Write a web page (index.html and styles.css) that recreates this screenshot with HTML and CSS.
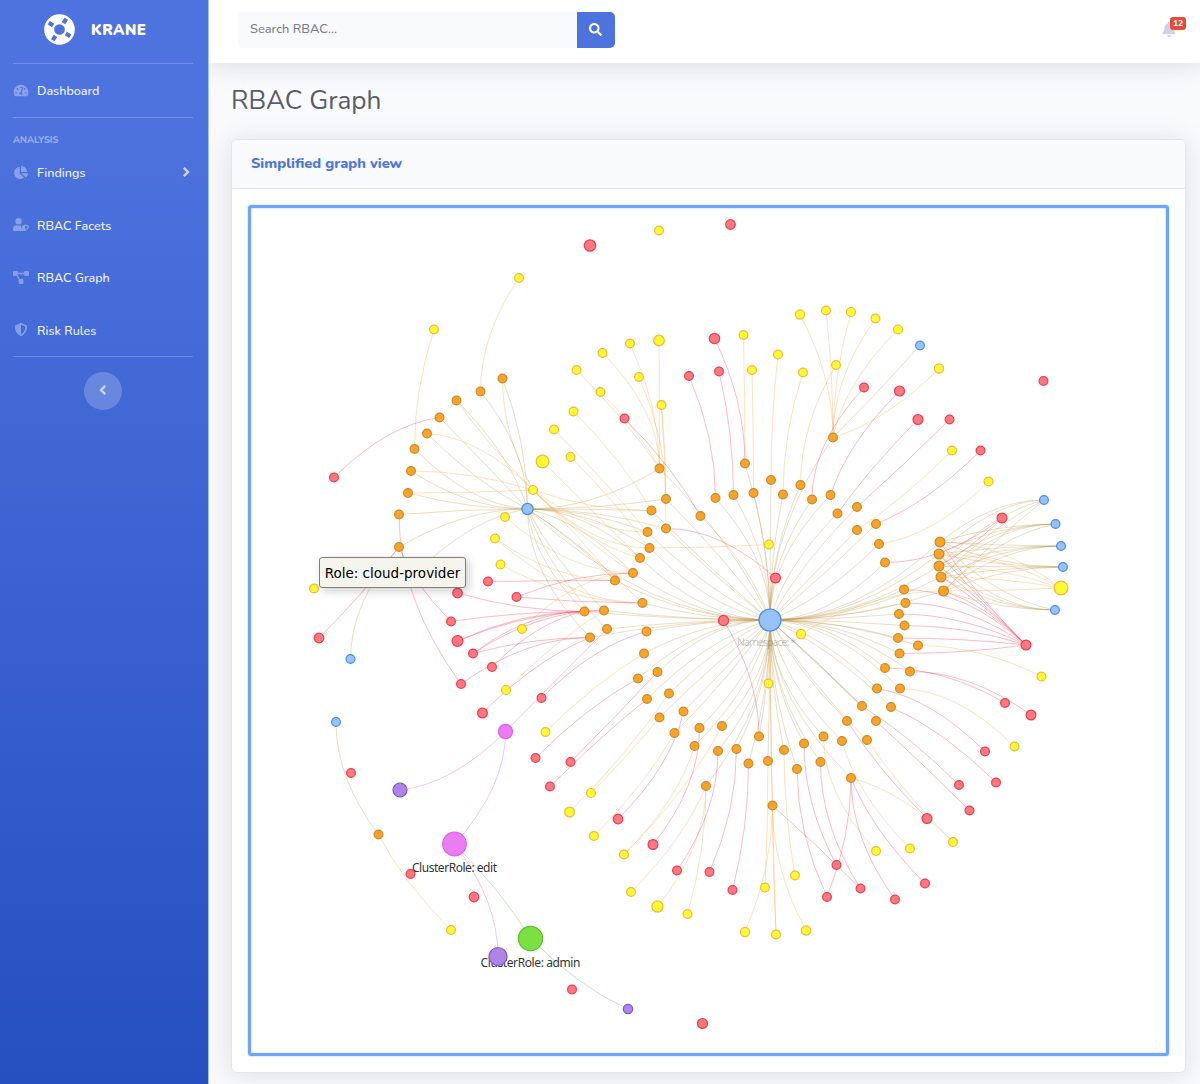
FILE: index.html
```html
<!DOCTYPE html>
<html lang="en">
<head>
<meta charset="utf-8">
<title>Krane - RBAC Graph</title>
<link rel="stylesheet" href="styles.css">
</head>
<body>
<div class="app">
  <nav class="sidebar">
    <a class="brand">
      <svg class="brand-icon" viewBox="-15 -15 30 30">
        <circle r="10" fill="none" stroke="#fff" stroke-width="9.6"/>
        <g fill="#4e73df" transform="rotate(-58)">
          <rect x="7.3" y="-2" width="5" height="4"/>
          <rect x="-12.3" y="-2" width="5" height="4"/>
          <rect x="-2" y="7.3" width="4" height="5"/>
          <rect x="-2" y="-12.3" width="4" height="5"/>
        </g>
      </svg>
      <span class="brand-text">KRANE</span>
    </a>
    <hr class="divider">
    <a class="nav-link">
      <svg class="nav-icon" viewBox="0 0 576 512"><path fill-rule="evenodd" d="M288 32C129 32 0 161 0 320c0 53 14 102 39 145 6 9 16 15 27 15h444c11 0 21-6 27-15 25-43 39-92 39-145C576 161 447 32 288 32zm0 64a32 32 0 1 1 0 64 32 32 0 0 1 0-64zM96 384a32 32 0 1 1 0-64 32 32 0 0 1 0 64zm48-160a32 32 0 1 1 0-64 32 32 0 0 1 0 64zm199 192H233c-26-45 0-94 42-96l62-184c8-24 46-13 38 12l-61 184c30 15 46 50 29 84zm137-32a32 32 0 1 1 0-64 32 32 0 0 1 0 64zm-48-160a32 32 0 1 1 0-64 32 32 0 0 1 0 64z"/></svg>
      <span>Dashboard</span>
    </a>
    <hr class="divider">
    <div class="heading">ANALYSIS</div>
    <a class="nav-link">
      <svg class="nav-icon" viewBox="0 0 544 512"><path d="M527.79 288H290.5l158.03 158.03c6.04 6.04 15.98 6.53 22.19.68 38.7-36.46 65.32-85.61 73.13-140.86 1.34-9.46-6.51-17.85-16.06-17.85zm-15.83-64.8C503.72 103.74 408.26 8.28 288.8.04 279.68-.59 272 7.1 272 16.24V240h223.77c9.14 0 16.82-7.68 16.19-16.8zM224 288V50.71c0-9.55-8.39-17.4-17.84-16.06C86.99 51.49-4.1 155.6.14 280.37 4.5 408.51 114.83 513.59 243.03 511.98c50.4-.63 96.97-16.87 135.26-44.03 7.9-5.6 8.42-17.23 1.57-24.08L224 288z"/></svg>
      <span>Findings</span>
      <svg class="chevron" viewBox="0 0 8 12"><path d="M1.8 1.8L6 6l-4.2 4.2"/></svg>
    </a>
    <a class="nav-link low">
      <svg class="nav-icon" viewBox="0 0 640 512"><path fill-rule="evenodd" d="M224 256A128 128 0 1 0 224 0a128 128 0 0 0 0 256zm96 64c-5-19-2-28 4-32h-10c-55 25-125 25-180 0C60 288 0 348 0 422v42c0 27 21 48 48 48h400c-70-40-121-105-128-192zm302-15l-115-48c-7-3-15-3-22 0l-115 48c-11 5-18 15-18 27 0 119 69 201 133 180 45-15 155-90 155-180 0-12-7-22-18-27zM496 464V310l96 40c-4 50-45 98-96 114z"/></svg>
      <span>RBAC Facets</span>
    </a>
    <a class="nav-link low">
      <svg class="nav-icon" viewBox="0 0 640 512"><path d="M32 0h128a32 32 0 0 1 32 32v32h256V32a32 32 0 0 1 32-32h128a32 32 0 0 1 32 32v128a32 32 0 0 1-32 32H480a32 32 0 0 1-32-32v-32H192v32l-4 14 84 146h112a32 32 0 0 1 32 32v128a32 32 0 0 1-32 32H256a32 32 0 0 1-32-32V352l5-16-83-144H32a32 32 0 0 1-32-32V32A32 32 0 0 1 32 0z"/></svg>
      <span>RBAC Graph</span>
    </a>
    <a class="nav-link low">
      <svg class="nav-icon" viewBox="0 0 512 512"><path d="M466.5 83.7l-192-80a48.15 48.15 0 0 0-36.9 0l-192 80C27.7 91.1 16 108.6 16 128c0 198.5 114.5 335.7 221.5 380.3 11.8 4.9 25.1 4.9 36.9 0C360.1 472.6 496 349.3 496 128c0-19.4-11.7-36.9-29.5-44.3zM256.1 446.3l-.1-381 175.9 73.3c-3.3 151.4-82.1 261.1-175.8 307.7z"/></svg>
      <span>Risk Rules</span>
    </a>
    <hr class="divider">
    <button class="collapse"><svg class="chevron" viewBox="0 0 8 12"><path d="M6.2 1.8L2 6l4.2 4.2"/></svg></button>
  </nav>

  <div class="content">
    <header class="topbar">
      <div class="search">
        <div class="search-input">Search RBAC...</div>
        <button class="search-button"><svg viewBox="0 0 512 512"><path d="M505 442.7L405.3 343c-4.5-4.5-10.6-7-17-7H372c27.6-35.3 44-79.7 44-128C416 93.1 322.9 0 208 0S0 93.1 0 208s93.1 208 208 208c48.3 0 92.7-16.4 128-44v16.3c0 6.4 2.5 12.5 7 17l99.7 99.7c9.4 9.4 24.6 9.4 33.9 0l28.3-28.3c9.4-9.4 9.4-24.6.1-34zM208 336c-70.7 0-128-57.2-128-128 0-70.7 57.2-128 128-128 70.7 0 128 57.2 128 128 0 70.7-57.2 128-128 128z"/></svg></button>
      </div>
      <div class="alerts">
        <svg viewBox="0 0 448 512"><path d="M224 512c35.32 0 63.97-28.65 63.97-64H160.03c0 35.35 28.65 64 63.97 64zm215.39-149.71c-19.32-20.76-55.47-51.99-55.47-154.29 0-77.7-54.48-139.9-127.94-155.16V32c0-17.67-14.32-32-31.98-32s-31.98 14.33-31.98 32v20.84C118.56 68.1 64.08 130.3 64.08 208c0 102.3-36.15 133.53-55.47 154.29-6 6.45-8.66 14.16-8.61 21.71.11 16.4 12.98 32 32.1 32h383.8c19.12 0 32-15.6 32.1-32 .05-7.55-2.61-15.27-8.61-21.71z"/></svg>
        <span class="badge">12</span>
      </div>
    </header>
    <main class="page">
      <h1>RBAC Graph</h1>
      <section class="card">
        <h2 class="card-header"><span>Simplified graph view</span></h2>
        <div class="card-body">
          <div class="network">
            <svg id="graph" viewBox="251 208 915 845"></svg>
            <div class="tooltip"><span>Role: cloud-provider</span></div>
          </div>
        </div>
      </section>
    </main>
  </div>
</div>
<script src="graph.js"></script>
</body>
</html>
```

FILE: styles.css
```css
* { box-sizing: border-box; }
body {
  margin: 0;
  font-family: Nunito, "Open Sans", "Noto Sans", sans-serif;
  background: #f8fafc;
}
button { border: 0; padding: 0; }
h1, h2 { margin: 0; font-weight: 400; }
.app { display: flex; height: 1084px; overflow: hidden; }

.sidebar {
  position: relative;
  z-index: 1;
  width: 209px;
  flex: none;
  display: flex;
  flex-direction: column;
  background: linear-gradient(180deg, #4e73df 10%, #264fbf 100%);
  border-right: 1px solid #a9b9f2;
  color: #f0f3fd;
}
.brand {
  height: 63px;
  flex: none;
  display: flex;
  align-items: center;
  padding: 0 0 4px 44px;
  color: #fff;
}
.brand-icon { width: 31px; height: 31px; }
.brand-text {
  margin-left: 16px;
  font-size: 15px;
  font-weight: 900;
  letter-spacing: 0.5px;
}
.divider {
  width: 180px;
  height: 1px;
  flex: none;
  margin: 0 0 0 13px;
  border: 0;
  background: rgba(255, 255, 255, 0.2);
}
.nav-link {
  height: 52.5px;
  flex: none;
  display: flex;
  align-items: center;
  gap: 8px;
  padding-left: 13px;
  font-size: 12.6px;
  font-weight: 500;
}
.nav-link.low span { padding-top: 1px; }
.nav-icon { width: 16px; height: 13px; fill: rgba(255, 255, 255, 0.34); }
.chevron { width: 8px; height: 12px; fill: none; stroke: #c8d3f7; stroke-width: 2.4; }
.nav-link .chevron { margin-left: auto; margin-right: 18px; }
.heading {
  height: 28.5px;
  flex: none;
  padding: 16px 0 0 13px;
  font-size: 9.3px;
  line-height: 13px;
  font-weight: 800;
  color: rgba(255, 255, 255, 0.42);
}
.collapse {
  width: 38px;
  height: 38px;
  margin: 15px 0 0 84px;
  border-radius: 50%;
  background: rgba(255, 255, 255, 0.2);
  display: flex;
  align-items: center;
  justify-content: center;
  padding-bottom: 2px;
}

.content { flex: 1; min-width: 0; }
.topbar {
  height: 63px;
  position: relative;
  display: flex;
  align-items: center;
  justify-content: space-between;
  padding: 0 14px 3px 29px;
  background: #fff;
  box-shadow: 0 2px 26px rgba(58, 59, 69, 0.17);
}
.search { display: flex; height: 36px; width: 377px; }
.search-input {
  flex: 1;
  display: flex;
  align-items: center;
  padding: 0 12px 2px;
  border-radius: 5px 0 0 5px;
  background: #f8fafc;
  font-size: 12.8px;
  font-weight: 500;
  color: #7b7d89;
}
.search-button {
  width: 38px;
  display: flex;
  align-items: center;
  justify-content: center;
  padding: 0 1px 1px 0;
  border-radius: 0 5px 5px 0;
  background: #4e73df;
}
.search-button svg { width: 13px; height: 13px; fill: #fff; }
.alerts { display: flex; position: relative; width: 24px; height: 26px; }
.alerts svg { width: 14px; height: 15px; margin-top: 5px; fill: #d1d3e2; }
.badge {
  position: absolute;
  left: 8px;
  top: 0;
  width: 16px;
  height: 13px;
  border-radius: 3px;
  background: #e74a3b;
  color: #fff;
  font-size: 8.5px;
  font-weight: 800;
  line-height: 12px;
  text-align: center;
}

.page { padding: 18px 14px 0 22px; }
h1 {
  height: 58px;
  font-size: 26.2px;
  line-height: 39px;
  color: #5a5c69;
}
.card {
  height: 934px;
  border: 1px solid #e3e6f0;
  border-radius: 6px;
  background: #fff;
  box-shadow: 0 2px 26px rgba(58, 59, 69, 0.15);
}
.card-header {
  height: 49px;
  display: flex;
  align-items: center;
  padding: 0 19px 2px;
  border-bottom: 1px solid #e3e6f0;
  border-radius: 5px 5px 0 0;
  background: #f8fafc;
  font-size: 14.6px;
  font-weight: 800;
  color: #4e73df;
}
.card-body { padding: 16px; }
.network {
  position: relative;
  height: 851px;
  border: 3px solid #70a4f9;
  border-radius: 3px;
  box-shadow: 0 0 2px #9cc1fb, inset 0 0 2px #9cc1fb;
}
#graph { display: block; width: 100%; height: 100%; }
#graph text { font-family: "Noto Sans", "DejaVu Sans", sans-serif; font-size: 12px; fill: #343434; }
#graph .faded { opacity: 0.27; font-size: 10.5px; }
.tooltip {
  position: absolute;
  left: 68px;
  top: 349px;
  width: 147px;
  height: 31px;
  border: 1px solid #808074;
  border-radius: 3px;
  background: #f5f4ed;
  box-shadow: 3px 3px 10px rgba(0, 0, 0, 0.2);
  font-family: "DejaVu Sans", sans-serif;
  font-size: 13.5px;
  line-height: 31px;
  text-align: center;
  color: #000;
  white-space: nowrap;
}

.edge { fill: none; stroke-width: 1; }
.edge.ns { stroke: #bd9242; stroke-opacity: 0.3; }
.edge.y { stroke: #ffa63a; stroke-opacity: 0.32; }
.edge.r { stroke: #fb2b4c; stroke-opacity: 0.32; }
.edge.m { stroke: #e36af0; stroke-opacity: 0.38; }
.edge.g { stroke: #6fa860; stroke-opacity: 0.36; }
.node.o { fill: #fba324; stroke: #c98a2e; }
.node.y { fill: #fffb30; stroke: #fdb33a; }
.node.r { fill: #fb7980; stroke: #f43a4b; }
.node.b { fill: #97c2fc; stroke: #488ceb; }
.node.p { fill: #ad85e4; stroke: #8050e2; }
.node.m { fill: #eb7df4; stroke: #e25bee; }
.node.g { fill: #7be141; stroke: #5bbd2d; }
.node { stroke-width: 1.2; }
```

FILE: graph.js
```js
// Edges are quadratic curves leaving the source diagonally and
// arriving along the longer axis.
const HUB = "770,620", NS = "527.5,509";
const svg = document.getElementById("graph");
const SVGNS = "http://www.w3.org/2000/svg";

function add(tag, attrs, text) {
  const el = document.createElementNS(SVGNS, tag);
  for (const key in attrs) el.setAttribute(key, attrs[key]);
  if (text) el.textContent = text;
  svg.appendChild(el);
}
function edge(kind, from, to) {
  const [x1, y1] = from.split(",").map(Number);
  const [x2, y2] = to.split(",").map(Number);
  const dx = x2 - x1, dy = y2 - y1;
  const half = Math.max(Math.abs(dx), Math.abs(dy)) / 2;
  const cx = x1 + Math.sign(dx) * Math.min(half, Math.abs(dx));
  const cy = y1 + Math.sign(dy) * Math.min(half, Math.abs(dy));
  add("path", { class: "edge " + kind, d: `M${x1} ${y1}Q${cx} ${cy} ${x2} ${y2}` });
}
const list = s => s.trim().split(/\s+/);

const ring = list(`659.5,468.5 666,499 651.5,510.5 666,528.5 647.5,532 649.5,548 640,558 633,573 615,580.5
 642.5,603 604,610.5 584.5,611.5 607,629 590,637.5 646.5,631.5 644,653.5 657.5,672 638,678.5 669,693.5
 647,699 683.5,711.5 659.5,717.5 674.5,733 699.5,728 722,726 694.5,746 718,751 736.5,749 759,736.5
 748.5,763.5 768,761 784,750 804,743.5 797,769 820.5,762 823.5,736.5 842,741 867,740 847,721 876,721
 862,706 891,707 877,688.5 900,688.5 885,668 910,671.5 899.5,653.5 918,645.5 898,638 904.5,625.5
 899,614 905.5,603 904,589.5 885,562.5 879,544 857,530 876,524 857,507 837.5,513.5 830.5,495 812,499.5
 800.5,485 783,494.5 771,480 753.5,493 733.5,495 715.5,498 745,463.5 700.5,516 833,437.5 706,786
 772.5,805.5 851,778`);
const cluster = list("940,542 939,554 939,566 941,577 943.5,591");
const arc = list("502.5,378.5 480.5,391.5 456.5,400.5 439.5,417.5 427,433.5 414.5,449 411,471 408,493 399,514.5 399,547 415,574");
const blues = list("1044,500 1055.5,524 1061,546 1063,567 1055,610");

ring.concat(cluster).forEach(p => edge("ns", p, HUB));
ring.slice(0, 14).concat(arc).forEach(p => edge("ns", p, NS));
edge("ns", NS, HUB);
cluster.forEach(p => {
  blues.forEach(b => edge("ns", p, b));
  edge("y", "1061,588", p);
  edge("r", "1026,645", p);
});
edge("ns", "833,437.5", "920,345.5");
edge("ns", "399,547", "350.5,659");
edge("ns", "378.5,834.5", "336,722");

// Each role is followed by the subjects bound to it.
const groups = {
  y: `659.5,468.5 576.5,370 602.5,353 630,343.5 659,340.5 600.5,392
666,499 661.5,405 639,377
666,528.5 661.5,405
651.5,510.5 573.5,411.5 533,490
647.5,532 554,429.5 533,490
649.5,548 570.5,457 769,544.5 533,490
640,558 542.5,461.5 533,490
633,573 505,517 533,490 522,629
615,580.5 533,490 495,538.5
642.5,603 500.5,564.5 495,538.5
604,610.5 506,690
411,471 533,490
408,493 533,490
427,433.5 533,490
456.5,400.5 533,490
502.5,378.5 533,490
480.5,391.5 519,278
414.5,449 434,329.5
745,463.5 743.5,335
753.5,493 752,370
771,480 778,354.5
783,494.5 803,372.5
800.5,485 836,365
833,437.5 800,314.5 826,310.5 851,312 875.5,318.5 898,329.5 939,368.5
857,530 952,450.5
879,544 988.5,481.5
918,645.5 1041.5,676.5
943.5,591 801,634
900,688.5 1014.5,746.5
867,740 953,842
842,741 910,848.5
823.5,736.5 876,851
851,778 953,842
784,750 795,875.5
768,761 765,887.5
772.5,805.5 745,932 776,934.5 806,930.5
770,620 768.5,683.5 776,934.5
706,786 631,892 657.5,906.5 687.5,914
722,726 624,854.5
694.5,746 624,854.5
674.5,733 594,836
669,693.5 569.5,812
659.5,717.5 591,793
644,653.5 545.5,732
378.5,834.5 451,930`,
  r: `700.5,516 624.5,418.5
666,528.5 775.5,578
759,736.5 723.5,620.5
715.5,498 689,376
733.5,495 719,371.5
745,463.5 714.5,338.5
812,499.5 864,387.5
830.5,495 899.5,391
837.5,513.5 918,419.5
857,507 949.5,419.5
876,524 980.5,450.5
885,562.5 1002,518
939,566 1002,518
904,589.5 1026,645
905.5,603 1026,645
899,614 1026,645
904.5,625.5 1026,645
898,638 1026,645
899.5,653.5 1026,645
885,668 1005,703
910,671.5 1031,715
877,688.5 985,751.5
862,706 959,785
891,707 996,782.5
876,721 969.5,810.5
847,721 927,818.5
851,778 895,899.5 925,883.5 827,897
804,743.5 836.5,865
820.5,762 860.5,888.5
797,769 827,897
772.5,805.5 860.5,888.5
748.5,763.5 732.5,890
736.5,749 709.5,872
718,751 677,870.5
699.5,728 653,844.5
683.5,711.5 618,819
647,699 550,786.5
657.5,672 570.5,762
638,678.5 535.5,758
646.5,631.5 541.5,698
642.5,603 516.5,597
633,573 516.5,597
615,580.5 488,581.5
584.5,611.5 457.5,593 451,621.5 457.5,641 473,653.5 492,667
604,610.5 457.5,641 473,653.5
590,637.5 473,653.5 461,684 482.5,713
439.5,417.5 334,477.5
399,514.5 461,684
399,547 319,638 451,621.5`
};
for (const kind in groups)
  groups[kind].split("\n").forEach(line => {
    const [role, ...subjects] = list(line);
    subjects.forEach(s => edge(kind, s, role));
  });
edge("m", "607,629", "505.5,731.5");
edge("m", "505.5,731.5", "400,790");
edge("m", "454.5,844", "505.5,731.5");
edge("m", "454.5,844", "498,956.5");
edge("g", "454.5,844", "530.5,938.5");
edge("g", "530.5,938.5", "628,1009");
edge("g", "862,706", HUB);

add("text", { class: "faded", x: 737, y: 645.5, textLength: 59 }, "Namespace: *");

const nodes = {
  o: ring.concat(arc, cluster.map(p => p + ",4.9"), ["378.5,834.5"]),
  b: blues.concat(list("920,345.5 350.5,659 336,722 527.5,509,5.6 770,620,11")),
  y: list(`659,230.5 519,278 434,329.5 602.5,353 630,343.5 659,340.5,5.3 576.5,370 639,377 600.5,392 661.5,405
   573.5,411.5 554,429.5 542.5,461.5,6.3 570.5,457 533,490,4.5 505,517 495,538.5 500.5,564.5 522,629 506,690,4.5
   545.5,732 591,793,4.5 569.5,812,4.9 594,836 624,854.5 631,892 657.5,906.5,5.6 687.5,914 745,932,4.6 776,934.5
   806,930.5,4.7 765,887.5 795,875.5 876,851 910,848.5 953,842 1014.5,746.5 1041.5,676.5 1061,588,6.8
   988.5,481.5 952,450.5 939,368.5,4.6 898,329.5,4.5 875.5,318.5 851,312,4.5 826,310.5 800,314.5,4.6
   836,365 803,372.5 778,354.5 752,370 743.5,335 769,544.5 801,634,4.6 768.5,683.5 314,588.5 451,930`),
  r: list(`590,245.5,5.7 730.5,224.5,4.8 714.5,338.5,5.2 689,376 719,371.5 624.5,418.5 334,477.5 864,387.5
   899.5,391,5 918,419.5,5 949.5,419.5 980.5,450.5 1043.5,381 1002,518,4.9 1026,645,4.9 1005,703
   1031,715,4.9 985,751.5 996,782.5 959,785 969.5,810.5 927,818.5,4.9 895,899.5 925,883.5 860.5,888.5
   836.5,865 827,897 732.5,890 709.5,872 677,870.5 653,844.5,4.9 618,819,4.8 550,786.5 570.5,762
   535.5,758 541.5,698 482.5,713,4.9 461,684 492,667 473,653.5 457.5,641,5.4 451,621.5 457.5,593,4.8
   488,581.5 516.5,597 319,638,4.8 351,773 410.5,874 474,897,4.8 572,989.5 702.5,1023.5,5
   723.5,620.5,5.1 775.5,578,4.9`),
  p: list("400,790,7 628,1009,4.7"),
  m: list("505.5,731.5,7.1 454.5,844,11.8"),
  g: list("530.5,938.5,12.1")
};
for (const kind in nodes)
  nodes[kind].forEach(p => {
    const [x, y, r = 4.4] = p.split(",");
    add("circle", { class: "node " + kind, cx: x, cy: y, r: r });
  });
add("text", { x: 412, y: 871.5, textLength: 85 }, "ClusterRole: edit");
add("text", { x: 480.5, y: 967, textLength: 100 }, "ClusterRole: admin");
add("circle", { class: "node p", cx: 498, cy: 956.5, r: 9 });
```
